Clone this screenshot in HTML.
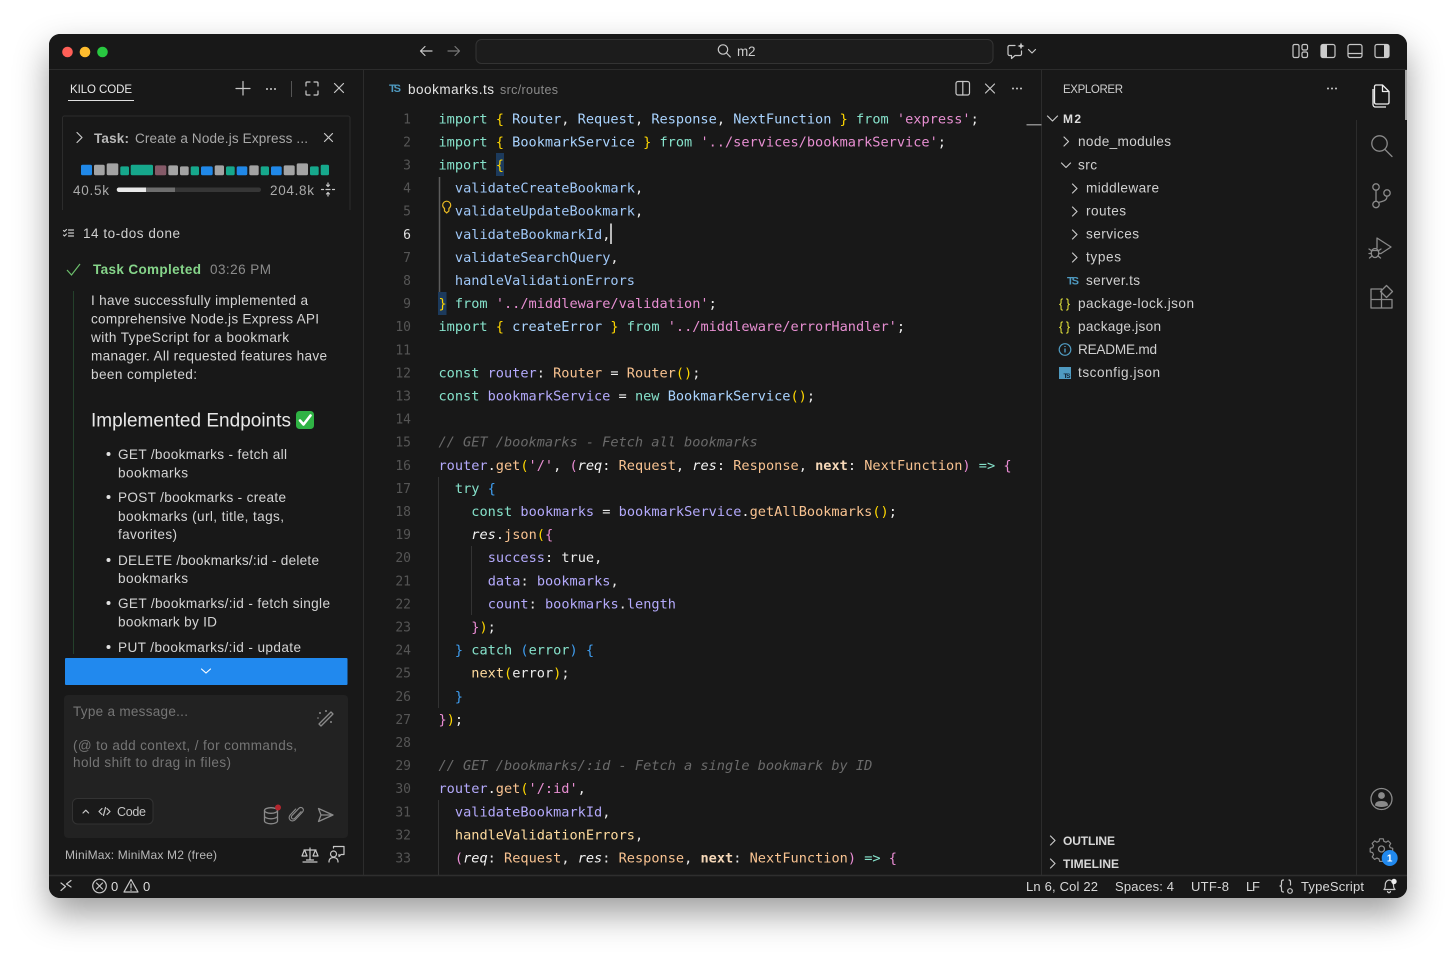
<!DOCTYPE html>
<html><head><meta charset="utf-8"><title>VS Code - Kilo Code</title>
<style>
html,body{margin:0;padding:0;background:#fff;width:1456px;height:963px;overflow:hidden}
svg{display:block}
text{font-family:"Liberation Sans",sans-serif;white-space:pre}
.c{font-family:"DejaVu Sans Mono","Liberation Mono",monospace;font-size:13.6px;fill:#ececec}
.n{font-family:"DejaVu Sans Mono","Liberation Mono",monospace;font-size:13px;fill:#555;text-anchor:end}
.k{fill:#86e2cb}.b{fill:#aad4ff}.y{fill:#ffd700}.p{fill:#ea8cd4}.s{fill:#e88fd2}.l{fill:#b4aafc}.o{fill:#f9c391}.w{fill:#eee}.t{fill:#3f9ef0}
.i{font-style:italic;fill:#f4f4f4}.m{font-style:italic;fill:#6a6a6a}.h{fill:#a0c8f8}.g{fill:#ffdb9e}.bd{font-weight:bold}
.u{font-size:13.6px;fill:#d4d4d4}
.x{font-size:13.6px;fill:#d0d0d0}
.ic{fill:none;stroke:#c8c8c8;stroke-width:1.2;stroke-linecap:round;stroke-linejoin:round}
.ia{fill:none;stroke:#8a8a8a;stroke-width:1.3;stroke-linecap:round;stroke-linejoin:round}
.id{fill:none;stroke:#777;stroke-width:1.2;stroke-linecap:round;stroke-linejoin:round}
</style></head><body>
<svg width="1456" height="963" viewBox="0 0 1456 963" xmlns="http://www.w3.org/2000/svg">
<defs>
<filter id="sh" x="-10%" y="-10%" width="120%" height="125%"><feDropShadow dx="0" dy="16" stdDeviation="17" flood-color="#000" flood-opacity=".38"/></filter>
<clipPath id="cl"><rect x="60" y="280" width="300" height="374.5"/></clipPath>
</defs>
<rect x="49" y="34" width="1358" height="864" rx="11" fill="#181818" filter="url(#sh)"/>
<rect x="49" y="34" width="1358" height="864" rx="11" fill="#181818"/>

<!-- dividers -->
<path d="M49 69.5H1407M363.5 70V875M1041.5 70V875M1356.5 120V875" stroke="#2c2c2c" stroke-width="1" fill="none"/>
<path d="M49 875.5H1407" stroke="#2e2e2e" stroke-width="1.5"/>
<rect x="1405" y="70" width="2" height="50" fill="#a8a8a8"/>

<!-- traffic lights -->
<circle cx="67.5" cy="52" r="5.3" fill="#ff5f57"/><circle cx="85" cy="52" r="5.3" fill="#febc2e"/><circle cx="102.5" cy="52" r="5.3" fill="#28c840"/>

<!-- title bar -->
<path class="ic" d="M420.5 51H432M420.5 51l4.500-4.500M420.500 51l4.500 4.500" stroke="#ddd"/>
<path class="id" d="M448 51H459.500M459.500 51l-4.500-4.500M459.500 51l-4.500 4.500"/>
<rect x="476" y="39.500" width="517" height="24" rx="5.500" fill="#1c1c1c" stroke="#333"/>
<circle cx="723" cy="49.500" r="4.700" class="ic" stroke="#bbb"/><path class="ic" d="M726.500 53l3.800 4"/>
<text x="737" y="56" font-size="13.500" fill="#ccc" textLength="18.500">m2</text>
<g transform="translate(2 0)">
<path class="ic" d="M1013 45.500h-5.500a1.500 1.500 0 0 0-1.500 1.500v7a1.500 1.500 0 0 0 1.500 1.500h2v3l3.500-3h5a1.500 1.500 0 0 0 1.500-1.500v-3"/>
<path d="M1019 42.500l1 2.500 2.500 1-2.500 1-1 2.500-1-2.500-2.500-1 2.500-1z" fill="#ccc"/>
</g>
<path class="ic" d="M1028.500 49.500l3.500 3.500 3.500-3.500"/>
<g class="ic" stroke-width="1.300">
<rect x="1293" y="44.500" width="6" height="13" rx="1.500"/><rect x="1302" y="44.500" width="5.500" height="5.500" rx="1.500"/><rect x="1302" y="52" width="5.500" height="5.500" rx="1.500"/>
<rect x="1321" y="44.500" width="14" height="13" rx="2"/>
<rect x="1348" y="44.500" width="14" height="13" rx="2"/><path d="M1348 53.500h14"/>
<rect x="1375" y="44.500" width="14" height="13" rx="2"/>
</g>
<path d="M1323 44.500h4v13h-4a2 2 0 0 1-2-2v-9a2 2 0 0 1 2-2z" fill="#ccc"/>
<path d="M1384 44.500h3a2 2 0 0 1 2 2v9a2 2 0 0 1-2 2h-3z" fill="#ccc"/>

<!-- left panel header -->
<text x="70" y="93" font-size="11.500" fill="#e8e8e8" textLength="62">KILO CODE</text>
<rect x="68" y="100" width="66" height="1" fill="#e0e0e0"/>
<path class="ic" d="M243 81.500v13.500M236 88.500h14" stroke-width="1.400"/>
<g fill="#ccc"><circle cx="267" cy="89" r="1"/><circle cx="271" cy="89" r="1"/><circle cx="275" cy="89" r="1"/></g>
<path d="M291.500 81v16" stroke="#555"/>
<path class="ic" d="M306 86v-3a1 1 0 0 1 1-1h3M314 82h3a1 1 0 0 1 1 1v3M318 91v3a1 1 0 0 1-1 1h-3M310 95h-3a1 1 0 0 1-1-1v-3"/>
<path class="ic" d="M334.500 83.500l9 9M343.500 83.500l-9 9"/>

<!-- task box -->
<path d="M62.500 210V118a2 2 0 0 1 2-2H348a2 2 0 0 1 2 2V210" fill="none" stroke="#2c2c2c"/>
<path class="ic" d="M77 132.500l5 5-5 5" stroke="#aaa"/>
<text x="94" y="143" font-size="13.500" font-weight="bold" fill="#b8b8b8" textLength="35">Task:</text>
<text x="135" y="143" font-size="13.500" fill="#a8a8a8" textLength="173">Create a Node.js Express ...</text>
<path class="ic" d="M324.500 133.500l8 8M332.500 133.500l-8 8" stroke="#bbb"/>
<g>
<rect x="81" y="164.700" width="11" height="10.600" rx="1.500" fill="#2088e8"/>
<rect x="94" y="164.700" width="10.700" height="10.600" rx="1.500" fill="#a3a3a3"/>
<rect x="106.700" y="163.400" width="11.600" height="11.900" rx="1.500" fill="#a3a3a3"/>
<rect x="120.300" y="166.400" width="8.700" height="8.900" rx="1.500" fill="#16a88c"/>
<rect x="130.700" y="164.700" width="22.300" height="10.600" rx="1.500" fill="#16a88c"/>
<rect x="155" y="165.400" width="11.300" height="9.900" rx="1.500" fill="#855a68"/>
<rect x="168.300" y="165.400" width="9.700" height="9.900" rx="1.500" fill="#a3a3a3"/>
<rect x="180" y="166.400" width="8.700" height="8.900" rx="1.500" fill="#a3a3a3"/>
<rect x="190.700" y="166.400" width="8.300" height="8.900" rx="1.500" fill="#16a88c"/>
<rect x="201" y="166.400" width="11.700" height="8.900" rx="1.500" fill="#2088e8"/>
<rect x="214.700" y="165.400" width="9.300" height="9.900" rx="1.500" fill="#a3a3a3"/>
<rect x="226" y="166.400" width="8.700" height="8.900" rx="1.500" fill="#16a88c"/>
<rect x="236.700" y="166.400" width="10.600" height="8.900" rx="1.500" fill="#2088e8"/>
<rect x="249.300" y="165.400" width="9.400" height="9.900" rx="1.500" fill="#a3a3a3"/>
<rect x="260.700" y="166.400" width="8.300" height="8.900" rx="1.500" fill="#16a88c"/>
<rect x="271" y="166.400" width="10.700" height="8.900" rx="1.500" fill="#2088e8"/>
<rect x="283.700" y="165.400" width="11" height="9.900" rx="1.500" fill="#a3a3a3"/>
<rect x="296.700" y="163.400" width="11.300" height="11.900" rx="1.500" fill="#a3a3a3"/>
<rect x="310" y="166.400" width="8.700" height="8.900" rx="1.500" fill="#16a88c"/>
<rect x="320.700" y="164.700" width="8.300" height="10.600" rx="1.500" fill="#16a88c"/>
</g>
<text x="73" y="195" font-size="13.500" fill="#aaa" textLength="36">40.5k</text>
<rect x="117" y="187.500" width="144" height="4.500" rx="2.200" fill="#363636"/>
<rect x="146" y="187.500" width="29" height="4.500" fill="#6e6e6e"/>
<path d="M119 187.500h27v4.500h-27a2.200 2.200 0 0 1 0-4.500z" fill="#e8e8e8"/>
<text x="270" y="195" font-size="13.500" fill="#aaa" textLength="44">204.8k</text>
<path class="ic" d="M321.500 189.500h2M326 189.500h4M332.500 189.500h2M328 183v3.500M326.500 185l1.500 1.500 1.500-1.500M328 196v-3.500M326.500 194l1.500-1.500 1.500 1.500" stroke-width="1" stroke="#aaa"/>

<!-- todos -->
<path class="ic" d="M63.500 230.500l1 1 2-2M63.500 235l1 1 2-2M68.500 230h5M68.500 233h5M68.500 236h5" stroke-width="1.100"/>
<text x="83" y="238" font-size="13.500" fill="#d0d0d0" textLength="97">14 to-dos done</text>

<!-- completed -->
<path d="M67 270l4.500 5 8.500-11" fill="none" stroke="#6cbf6c" stroke-width="1.200"/>
<text x="93" y="274" font-size="13.500" font-weight="bold" fill="#86d58a" textLength="108">Task Completed</text>
<text x="210" y="274" font-size="13.500" fill="#8c8c8c" textLength="61">03:26 PM</text>
<path d="M73.500 291V654" stroke="#24402b"/>
<text class="u" x="91" y="305" textLength="217">I have successfully implemented a</text>
<text class="u" x="91" y="323.500" textLength="228">comprehensive Node.js Express API</text>
<text class="u" x="91" y="342" textLength="198">with TypeScript for a bookmark</text>
<text class="u" x="91" y="360.500" textLength="236">manager. All requested features have</text>
<text class="u" x="91" y="379" textLength="106">been completed:</text>
<text x="91" y="426.500" font-size="19" fill="#e8e8e8" textLength="200">Implemented Endpoints</text>
<rect x="296" y="411" width="18" height="18" rx="3.500" fill="#2fb344"/>
<path d="M300 420.500l3.500 4 7-9" fill="none" stroke="#fff" stroke-width="2.600" stroke-linecap="round" stroke-linejoin="round"/>
<g clip-path="url(#cl)">
<g fill="#e0e0e0"><circle cx="108.500" cy="454" r="2"/><circle cx="108.500" cy="497" r="2"/><circle cx="108.500" cy="560" r="2"/><circle cx="108.500" cy="603" r="2"/><circle cx="108.500" cy="647" r="2"/></g>
<text class="u" x="118" y="459" textLength="169">GET /bookmarks - fetch all</text>
<text class="u" x="118" y="477.500" textLength="70">bookmarks</text>
<text class="u" x="118" y="502" textLength="168">POST /bookmarks - create</text>
<text class="u" x="118" y="521" textLength="166">bookmarks (url, title, tags,</text>
<text class="u" x="118" y="539" textLength="59">favorites)</text>
<text class="u" x="118" y="565" textLength="201">DELETE /bookmarks/:id - delete</text>
<text class="u" x="118" y="583" textLength="70">bookmarks</text>
<text class="u" x="118" y="608" textLength="212">GET /bookmarks/:id - fetch single</text>
<text class="u" x="118" y="626.500" textLength="99">bookmark by ID</text>
<text class="u" x="118" y="652" textLength="183">PUT /bookmarks/:id - update</text>
</g>
<rect x="65" y="658" width="282.500" height="27" rx="1" fill="#2189ee"/>
<path d="M201.500 669l4.500 4 4.500-4" fill="none" stroke="#fff" stroke-width="1.100" stroke-linecap="round"/>

<!-- input -->
<rect x="64" y="695" width="284" height="143" rx="4" fill="#222"/>
<text x="73" y="716" font-size="13.500" fill="#757575" textLength="115">Type a message...</text>
<text x="73" y="750" font-size="13.500" fill="#757575" textLength="224">(@ to add context, / for commands,</text>
<text x="73" y="767" font-size="13.500" fill="#757575" textLength="158">hold shift to drag in files)</text>
<path class="ia" d="M319 724l12-12M321 726l12-12M319 724l2 2M331 712l2 2"/>
<g fill="#8a8a8a"><circle cx="320" cy="713" r="1"/><circle cx="331" cy="722" r="1"/><circle cx="326" cy="711" r="1"/><circle cx="318" cy="718" r=".8"/></g>
<rect x="72.500" y="798.500" width="80.500" height="25.500" rx="5" fill="#1a1a1a" stroke="#333"/>
<path class="ic" d="M83 813l2.800-2.800 2.800 2.800" stroke="#888"/>
<path class="ic" d="M102 808.500l-3 3 3 3M107 808.500l3 3-3 3M105.500 807.500l-2 8" stroke="#999" stroke-width=".9"/>
<text x="117" y="816" font-size="12.500" fill="#c4c4c4" textLength="29">Code</text>
<g class="ia"><ellipse cx="271" cy="810.500" rx="6.500" ry="2.800"/><path d="M264.500 810.500v10.500c0 1.500 3 2.800 6.500 2.800s6.500-1.300 6.500-2.800v-10.500M264.500 816c0 1.500 3 2.800 6.500 2.800s6.500-1.300 6.500-2.800"/></g>
<circle cx="278" cy="807.500" r="3" fill="#b3262e"/>
<g transform="translate(296 815) scale(.85) translate(-296 -815)"><path class="ia" d="M302 811l-7.500 8c-2 2.200-5.500-.8-3.300-3.200l8-8.500c3-3.200 7.500 1 4.500 4.200l-8.500 9c-4 4.200-10-1.200-6-5.500l6.500-7"/></g>
<path class="ia" d="M318.500 808.500l14.500 6.500-14.500 6.500 2.500-6.500zM321 815h12"/>
<text x="65" y="859" font-size="12" fill="#b8b8b8" textLength="152">MiniMax: MiniMax M2 (free)</text>
<path class="ic" d="M310 848v12M304 850h12M306.500 860h7M304 851l-2 5h5l-2-5M315 851l-2 5h5l-2-5M303 862h14" stroke="#d8d8d8" stroke-width="1.100"/>
<path class="ic" d="M333.500 848v-1.500h10.500v8h-3l-2 2v-2" stroke="#d8d8d8"/>
<circle cx="333.500" cy="854" r="3" class="ic" stroke="#d8d8d8"/><path class="ic" d="M329 862c0-3 2-4.500 4.500-4.500s4.500 1.500 4.500 4.500" stroke="#d8d8d8"/>

<!-- status bar -->
<path class="ic" d="M61 883l4.500 3.500-4.500 4M71 880.500l-4.500 3.500 4.500 3" stroke="#ddd"/>
<circle cx="99.500" cy="886" r="6.800" class="ic" stroke="#ddd"/><path class="ic" d="M96.500 883l6 6M102.500 883l-6 6" stroke="#ddd"/>
<text x="111" y="891" font-size="13" fill="#ddd" textLength="8">0</text>
<path class="ic" d="M131 879.500l7 12.500h-14zM131 884v4M131 890v.4" stroke="#ddd"/>
<text x="143" y="891" font-size="13" fill="#ddd" textLength="8">0</text>
<g font-size="13" fill="#d8d8d8">
<text x="1026" y="891" textLength="72">Ln 6, Col 22</text>
<text x="1115" y="891" textLength="59">Spaces: 4</text>
<text x="1191" y="891" textLength="38">UTF-8</text>
<text x="1246" y="891" textLength="14">LF</text>
<text x="1301" y="891" textLength="63">TypeScript</text>
</g>
<path class="ic" d="M1283.500 880c-1.500 0-2 .8-2 2v2c0 1-.5 2-1.500 2 1 0 1.500 1 1.500 2v2c0 1.200.5 2 2 2M1289 880c1.200 0 1.500.8 1.500 2v3" stroke="#ddd"/>
<circle cx="1290" cy="891" r="2.300" class="ic" stroke="#ddd"/>
<path class="ic" d="M1384 889.500c1.200-1 1.300-2.300 1.300-4.500 0-3 1.500-4.500 3.700-5 2 0 4.500 2 4.500 5 0 2 .4 3.500 1.500 4.500zM1387.500 891.500c.5 1.500 2.500 1.500 3 0" stroke="#ddd"/>
<circle cx="1394" cy="881.500" r="2.700" fill="#eee"/>

<!-- editor tab -->
<text x="389" y="92" font-size="11" font-weight="bold" fill="#4f9ac0" textLength="12">TS</text>
<text x="408" y="94" font-size="13.500" fill="#e4e4e4" textLength="86">bookmarks.ts</text>
<text x="500" y="94" font-size="12.500" fill="#8a8a8a" textLength="58">src/routes</text>
<rect x="956" y="81.500" width="13.500" height="13.500" rx="2" class="ic" stroke="#ccc"/><path class="ic" d="M962.800 81.500v13.500"/>
<path class="ic" d="M985.500 84l9 9M994.500 84l-9 9"/>
<g fill="#ccc"><circle cx="1013" cy="88.500" r="1"/><circle cx="1017" cy="88.500" r="1"/><circle cx="1021" cy="88.500" r="1"/></g>
<rect x="1026.500" y="124" width="15" height="1.500" fill="#8a8a8a"/>

<!-- guides + highlights -->
<path d="M439.500 177V292" stroke="#5c5c5c" stroke-width="1.500"/>
<path d="M438.500 477V708M471.500 546V615M438.500 800V875" stroke="#333" stroke-width="1"/>
<rect x="496" y="153" width="8" height="23" fill="#1c3a5c"/>
<rect x="438" y="292" width="8.500" height="23" fill="#1c3a5c"/>
<path d="M611 223.500V244" stroke="#eee" stroke-width="1.500"/>
<!-- bulb -->
<path d="M444.500 208.500c-1.200-1-1.800-2-1.800-3.300a4 4 0 0 1 8 0c0 1.300-.6 2.300-1.800 3.300v2.500l-2.200 2-2.200-2z" fill="none" stroke="#e8b923" stroke-width="1.200"/>

<!-- line numbers -->
<g transform="translate(0 .3)">
<text class="n" x="411" y="123">1</text><text class="n" x="411" y="146.100">2</text><text class="n" x="411" y="169.200">3</text><text class="n" x="411" y="192.300">4</text><text class="n" x="411" y="215.400">5</text><text class="n" x="411" y="238.500" style="fill:#e0e0e0">6</text><text class="n" x="411" y="261.600">7</text><text class="n" x="411" y="284.700">8</text><text class="n" x="411" y="307.800">9</text><text class="n" x="411" y="330.900">10</text><text class="n" x="411" y="354">11</text><text class="n" x="411" y="377.100">12</text><text class="n" x="411" y="400.200">13</text><text class="n" x="411" y="423.300">14</text><text class="n" x="411" y="446.400">15</text><text class="n" x="411" y="469.500">16</text><text class="n" x="411" y="492.600">17</text><text class="n" x="411" y="515.700">18</text><text class="n" x="411" y="538.800">19</text><text class="n" x="411" y="561.900">20</text><text class="n" x="411" y="585">21</text><text class="n" x="411" y="608.100">22</text><text class="n" x="411" y="631.200">23</text><text class="n" x="411" y="654.300">24</text><text class="n" x="411" y="677.400">25</text><text class="n" x="411" y="700.500">26</text><text class="n" x="411" y="723.600">27</text><text class="n" x="411" y="746.700">28</text><text class="n" x="411" y="769.800">29</text><text class="n" x="411" y="792.900">30</text><text class="n" x="411" y="816">31</text><text class="n" x="411" y="839.100">32</text><text class="n" x="411" y="862.200">33</text>

<!-- code -->
<text class="c" x="438.500" y="123"><tspan class="k">import</tspan> <tspan class="y">{</tspan> <tspan class="b">Router</tspan>, <tspan class="b">Request</tspan>, <tspan class="b">Response</tspan>, <tspan class="b">NextFunction</tspan> <tspan class="y">}</tspan> <tspan class="k">from</tspan> <tspan class="s">'express'</tspan>;</text>
<text class="c" x="438.500" y="146.100"><tspan class="k">import</tspan> <tspan class="y">{</tspan> <tspan class="b">BookmarkService</tspan> <tspan class="y">}</tspan> <tspan class="k">from</tspan> <tspan class="s">'../services/bookmarkService'</tspan>;</text>
<text class="c" x="438.500" y="169.200"><tspan class="k">import</tspan> <tspan class="y">{</tspan></text>
<text class="c" x="454.900" y="192.300"><tspan class="h">validateCreateBookmark</tspan>,</text>
<text class="c" x="454.900" y="215.400"><tspan class="h">validateUpdateBookmark</tspan>,</text>
<text class="c" x="454.900" y="238.500"><tspan class="h">validateBookmarkId</tspan>,</text>
<text class="c" x="454.900" y="261.600"><tspan class="h">validateSearchQuery</tspan>,</text>
<text class="c" x="454.900" y="284.700"><tspan class="h">handleValidationErrors</tspan></text>
<text class="c" x="438.500" y="307.800"><tspan class="y">}</tspan> <tspan class="k">from</tspan> <tspan class="s">'../middleware/validation'</tspan>;</text>
<text class="c" x="438.500" y="330.900"><tspan class="k">import</tspan> <tspan class="y">{</tspan> <tspan class="b">createError</tspan> <tspan class="y">}</tspan> <tspan class="k">from</tspan> <tspan class="s">'../middleware/errorHandler'</tspan>;</text>
<text class="c" x="438.500" y="377.100"><tspan class="k">const</tspan> <tspan class="l">router</tspan>: <tspan class="o">Router</tspan> = <tspan class="o">Router</tspan><tspan class="y">()</tspan>;</text>
<text class="c" x="438.500" y="400.200"><tspan class="k">const</tspan> <tspan class="l">bookmarkService</tspan> = <tspan class="k">new</tspan> <tspan class="b">BookmarkService</tspan><tspan class="y">()</tspan>;</text>
<text class="c m" x="438.500" y="446.400">// GET /bookmarks - Fetch all bookmarks</text>
<text class="c" x="438.500" y="469.500"><tspan class="l">router</tspan>.<tspan class="o">get</tspan><tspan class="y">(</tspan><tspan class="s">'/'</tspan>, <tspan class="p">(</tspan><tspan class="i">req</tspan>: <tspan class="o">Request</tspan>, <tspan class="i">res</tspan>: <tspan class="o">Response</tspan>, <tspan font-weight="bold" fill="#f6d8b8">next</tspan>: <tspan class="o">NextFunction</tspan><tspan class="p">)</tspan> <tspan class="k">=&gt;</tspan> <tspan class="p">{</tspan></text>
<text class="c" x="454.900" y="492.600"><tspan class="k">try</tspan> <tspan class="t">{</tspan></text>
<text class="c" x="471.300" y="515.700"><tspan class="k">const</tspan> <tspan class="l">bookmarks</tspan> = <tspan class="l">bookmarkService</tspan>.<tspan class="o">getAllBookmarks</tspan><tspan class="y">()</tspan>;</text>
<text class="c" x="471.300" y="538.800"><tspan class="i">res</tspan>.<tspan class="o">json</tspan><tspan class="y">(</tspan><tspan class="p">{</tspan></text>
<text class="c" x="487.700" y="561.900"><tspan class="l">success</tspan>: true,</text>
<text class="c" x="487.700" y="585"><tspan class="l">data</tspan>: <tspan class="l">bookmarks</tspan>,</text>
<text class="c" x="487.700" y="608.100"><tspan class="l">count</tspan>: <tspan class="l">bookmarks</tspan>.<tspan class="l">length</tspan></text>
<text class="c" x="471.300" y="631.200"><tspan class="p">}</tspan><tspan class="y">)</tspan>;</text>
<text class="c" x="454.900" y="654.300"><tspan class="t">}</tspan> <tspan class="k">catch</tspan> <tspan class="t">(</tspan><tspan class="k">error</tspan><tspan class="t">)</tspan> <tspan class="t">{</tspan></text>
<text class="c" x="471.300" y="677.400"><tspan class="g">next</tspan><tspan class="y">(</tspan>error<tspan class="y">)</tspan>;</text>
<text class="c" x="454.900" y="700.500"><tspan class="t">}</tspan></text>
<text class="c" x="438.500" y="723.600"><tspan class="p">}</tspan><tspan class="y">)</tspan>;</text>
<text class="c m" x="438.500" y="769.800">// GET /bookmarks/:id - Fetch a single bookmark by ID</text>
<text class="c" x="438.500" y="792.900"><tspan class="l">router</tspan>.<tspan class="o">get</tspan><tspan class="y">(</tspan><tspan class="s">'/:id'</tspan>,</text>
<text class="c" x="454.900" y="816"><tspan class="l">validateBookmarkId</tspan>,</text>
<text class="c" x="454.900" y="839.100"><tspan class="g">handleValidationErrors</tspan>,</text>
<text class="c" x="454.900" y="862.200"><tspan class="p">(</tspan><tspan class="i">req</tspan>: <tspan class="o">Request</tspan>, <tspan class="i">res</tspan>: <tspan class="o">Response</tspan>, <tspan font-weight="bold" fill="#f6d8b8">next</tspan>: <tspan class="o">NextFunction</tspan><tspan class="p">)</tspan> <tspan class="k">=&gt;</tspan> <tspan class="p">{</tspan></text>
</g>

<!-- explorer -->
<text x="1063" y="93" font-size="11.500" fill="#cfcfcf" textLength="60">EXPLORER</text>
<g fill="#ccc"><circle cx="1328" cy="88.500" r="1"/><circle cx="1332" cy="88.500" r="1"/><circle cx="1336" cy="88.500" r="1"/></g>
<path class="ic" d="M1047.500 116l5 5 5-5M1064 137l4.500 4.500-4.500 4.500M1061.500 163l4.500 4.500 4.500-4.500M1072.500 184l4.500 4.500-4.500 4.500M1072.500 207l4.500 4.500-4.500 4.500M1072.500 230l4.500 4.500-4.500 4.500M1072.500 253l4.500 4.500-4.500 4.500M1050.500 836l4.500 4.500-4.500 4.500M1050.500 859l4.500 4.500-4.500 4.500"/>
<text x="1063" y="123" font-size="12" font-weight="bold" fill="#ddd" textLength="18">M2</text>
<text class="x" x="1078" y="146" textLength="93">node_modules</text>
<text class="x" x="1078" y="169.500" textLength="19">src</text>
<text class="x" x="1086" y="192.500" textLength="73">middleware</text>
<text class="x" x="1086" y="215.500" textLength="40">routes</text>
<text class="x" x="1086" y="238.500" textLength="53">services</text>
<text class="x" x="1086" y="261.500" textLength="35">types</text>
<text x="1067" y="284.500" font-size="11" font-weight="bold" fill="#4f9ac0" textLength="12">TS</text>
<text class="x" x="1086" y="285" textLength="54">server.ts</text>
<text x="1059" y="308" font-size="12.500" fill="#e6e63c" textLength="11">{ }</text>
<text class="x" x="1078" y="308" textLength="116">package-lock.json</text>
<text x="1059" y="331" font-size="12.500" fill="#e6e63c" textLength="11">{ }</text>
<text class="x" x="1078" y="331" textLength="83">package.json</text>
<circle cx="1065" cy="349.500" r="5.800" fill="none" stroke="#4f9ac0" stroke-width="1.200"/><path d="M1065 348.500v4M1065 346v1" stroke="#4f9ac0" stroke-width="1.400"/>
<text class="x" x="1078" y="354" textLength="79">README.md</text>
<rect x="1059" y="367" width="12" height="12" fill="#4f9ac0"/><text x="1063.500" y="378" font-size="6.500" font-weight="bold" fill="#123" textLength="7">TS</text>
<text class="x" x="1078" y="377" textLength="82">tsconfig.json</text>
<text x="1063" y="845" font-size="12" font-weight="bold" fill="#d8d8d8" textLength="52">OUTLINE</text>
<text x="1063" y="868" font-size="12" font-weight="bold" fill="#d8d8d8" textLength="56">TIMELINE</text>

<!-- activity bar -->
<path d="M1376 85h6.500l6.500 6.500v11a1.500 1.500 0 0 1-1.500 1.500H1376a1.500 1.500 0 0 1-1.500-1.500v-16a1.500 1.500 0 0 1 1.500-1.500zM1382.500 85v6.500h6.500M1373 89v15.500a2.500 2.500 0 0 0 2.500 2.500H1386" fill="none" stroke="#eee" stroke-width="1.300" stroke-linejoin="round"/>
<circle cx="1379.500" cy="143.500" r="7.700" class="ia"/><path class="ia" d="M1385 149.500l7 7"/>
<g class="ia"><circle cx="1376" cy="187" r="3.200"/><circle cx="1376" cy="204.500" r="3.200"/><circle cx="1387" cy="193" r="3.200"/><path d="M1376 190.200v11M1387 196.200c0 4-3 5-7.800 6"/></g>
<path class="ia" d="M1377 248v-10l14 9-10 6.500"/>
<g class="ia"><ellipse cx="1375" cy="253" rx="3.800" ry="4.500"/><path d="M1372 250.500h6M1369 249l3 2M1381 249l-3 2M1369 253.500h2.500M1381 253.500h-2.500M1369.500 258l2.500-2M1380.500 258l-2.500-2"/></g>
<g class="ia"><path d="M1371 289h10.500v10.500h10.500v8.500h-21zM1371 299.500h10.500M1381.500 299.500V308"/><path d="M1386.500 285.500l6 6-6 6-6-6z"/></g>
<g><circle cx="1381.500" cy="799" r="10.500" fill="none" stroke="#8a8a8a" stroke-width="1.300"/><circle cx="1381.500" cy="795.500" r="3.400" fill="#8a8a8a"/><path d="M1375 805.500c0-3 2-4.500 6.500-4.500s6.500 1.500 6.500 4.500c-1.800 1-4 1.500-6.500 1.500s-4.700-.5-6.500-1.500z" fill="#8a8a8a"/></g>
<g class="ia"><circle cx="1381.500" cy="849" r="3"/><path d="M1379.500 839h4l.7 2.800 2.300 1 2.500-1.500 2.800 2.800-1.500 2.500 1 2.300 2.700.7v4l-2.700.7-1 2.300 1.500 2.500-2.800 2.800-2.500-1.500-2.300 1-.7 2.700h-4l-.7-2.700-2.300-1-2.500 1.500-2.800-2.800 1.500-2.500-1-2.300-2.700-.7v-4l2.700-.7 1-2.300-1.500-2.500 2.800-2.800 2.500 1.500 2.300-1z" transform="translate(138.100 83.700) scale(.9)"/></g>
<circle cx="1389.700" cy="858" r="8" fill="#2189ee"/>
<text x="1389.700" y="861.500" font-size="10" font-weight="bold" fill="#fff" text-anchor="middle">1</text>
</svg>
</body></html>
